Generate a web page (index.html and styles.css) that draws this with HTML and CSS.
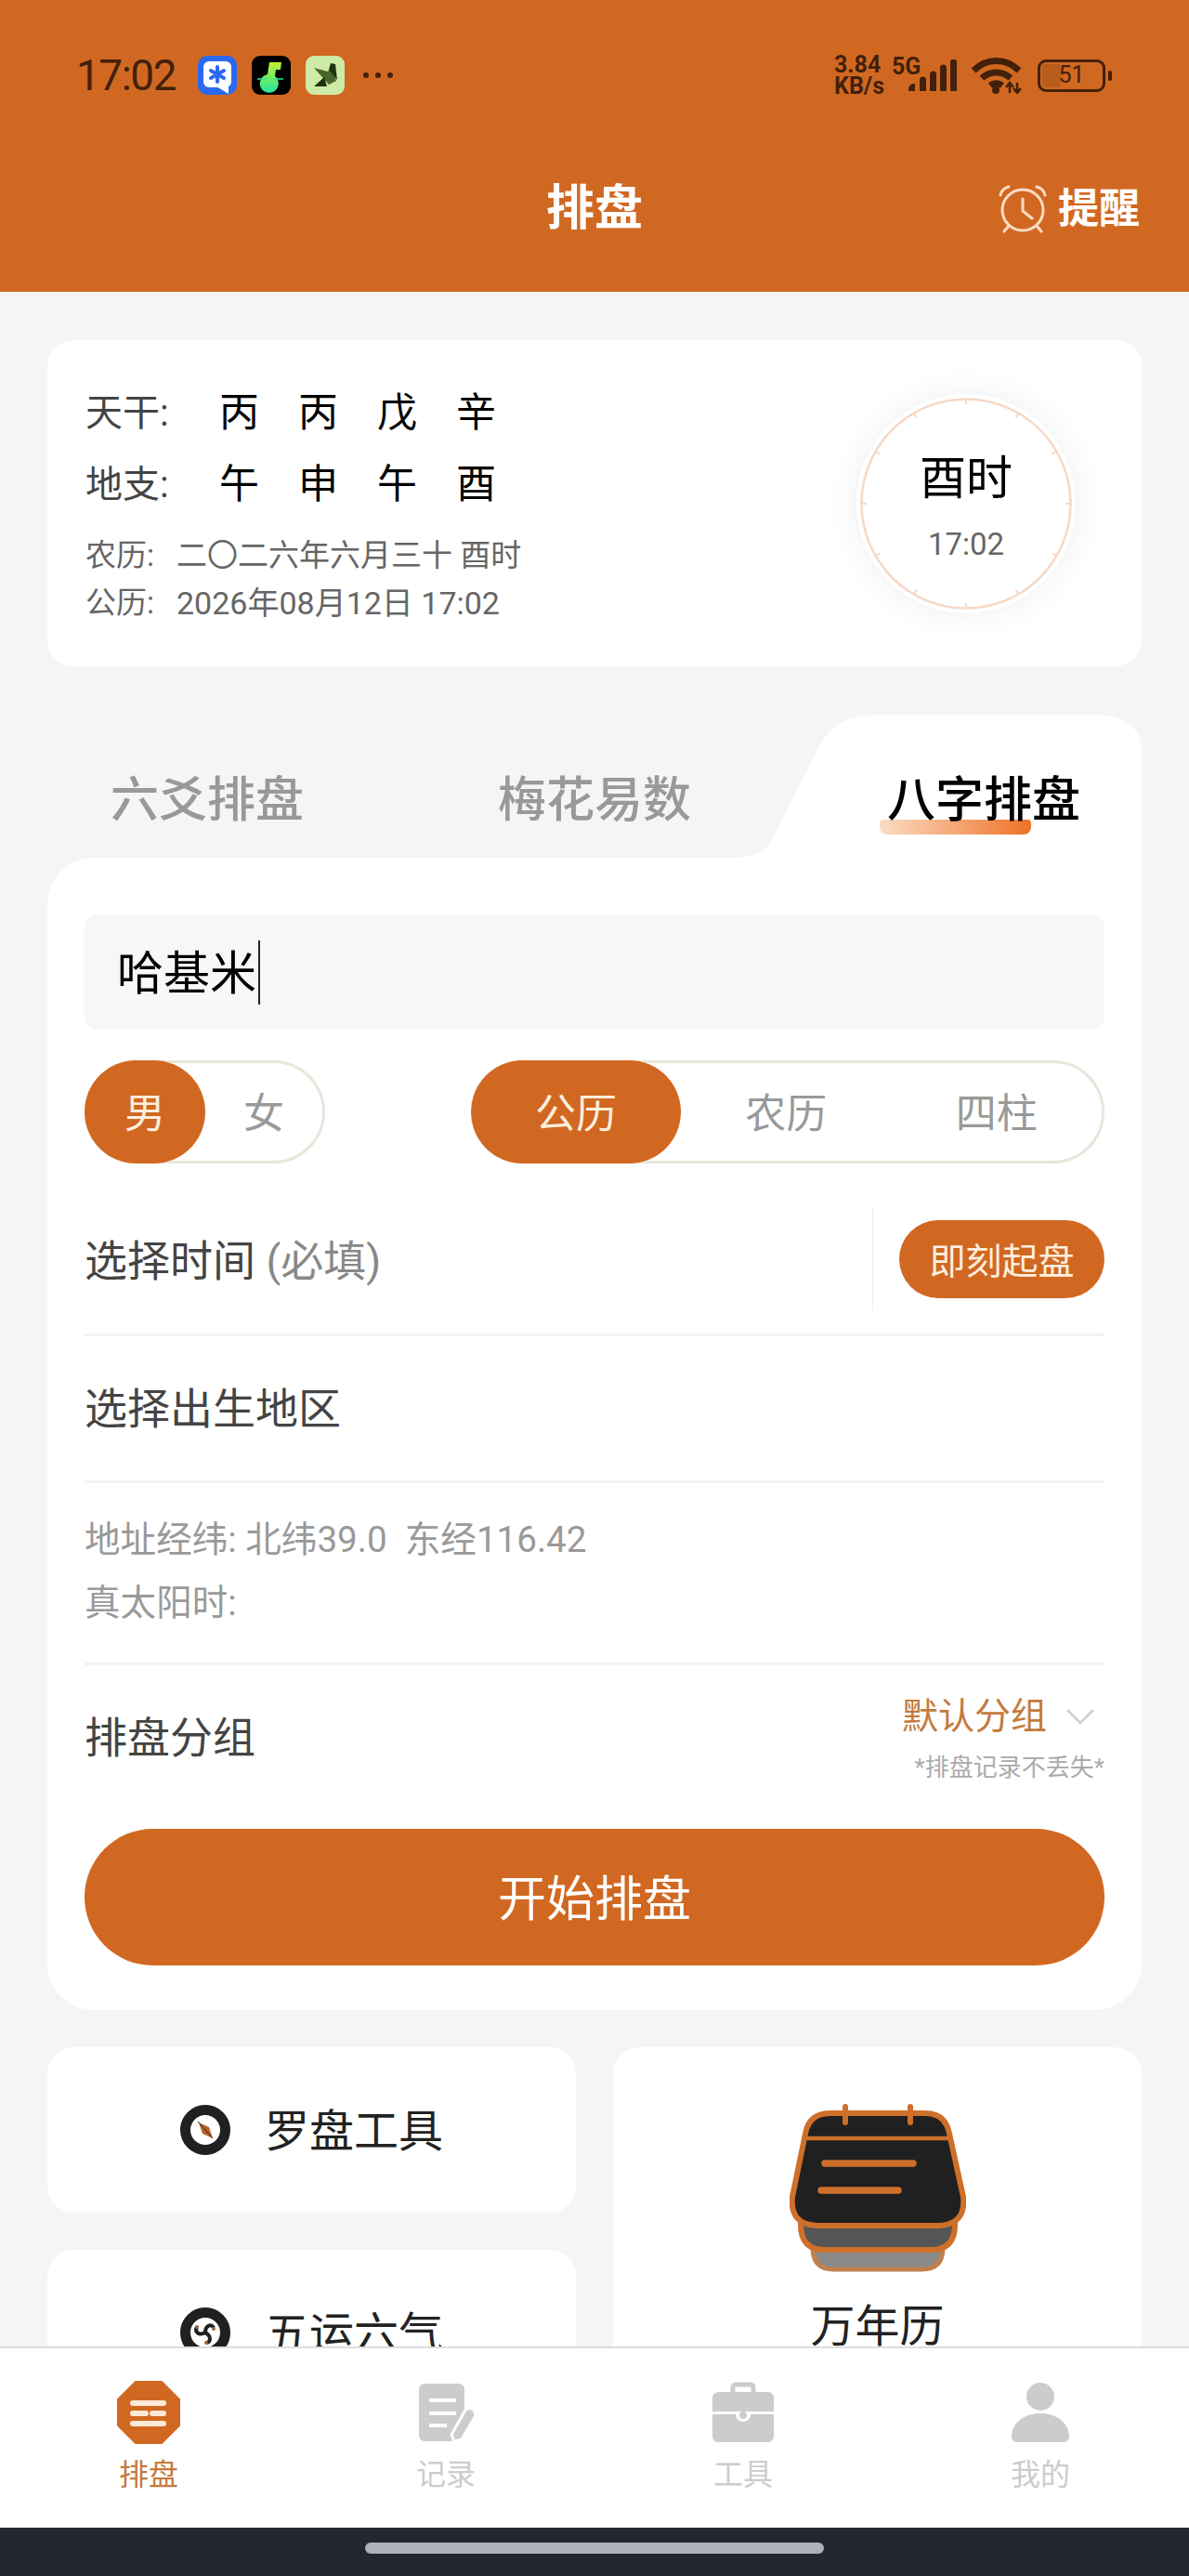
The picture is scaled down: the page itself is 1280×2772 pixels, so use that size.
FILE: index.html
```html
<!DOCTYPE html>
<html lang="zh-CN">
<head>
<meta charset="utf-8">
<title>排盘</title>
<link rel="stylesheet" href="styles.css">
</head>
<body>
<div class="app">
  <header class="header">
    <div class="status">
      <div class="status-left">
        <span class="clock-time">17:02</span>
        <svg class="app-icon" viewBox="0 0 42 42"><rect width="42" height="42" rx="10" fill="#2b6af0"/><rect x="6" y="6" width="30" height="28" rx="6" fill="#fff"/><path d="M20 33h13v8z" fill="#fff"/><path d="M21 12v16M14 16l14 8M28 16l-14 8" stroke="#2b6af0" stroke-width="4" stroke-linecap="round"/></svg>
        <svg class="app-icon" viewBox="0 0 42 42"><defs><linearGradient id="gn" x1="0" y1="0" x2="0" y2="1"><stop offset="0" stop-color="#c4f02c"/><stop offset="1" stop-color="#22e8a0"/></linearGradient></defs><rect width="42" height="42" rx="9" fill="#000"/><path d="M19 7H32L31 15H26L25 22A10 10 0 1 1 17 20Z" fill="url(#gn)"/><path d="M6 25h10M24 25h10" stroke="#2ee88c" stroke-width="1.500"/></svg>
        <svg class="app-icon" viewBox="0 0 42 42"><rect width="42" height="42" rx="9" fill="#cdeaa6"/><path d="M9 13L24 17 28 10 33 27 25 31Z" fill="#48662c"/><path d="M25 15L27 8 32 9 34 26Z" fill="#1c3310"/><path d="M9 33L20 23 23 33Z" fill="#1c3310"/></svg>
        <span class="dots"><i></i><i></i><i></i></span>
      </div>
      <div class="status-right">
        <div class="netspeed"><span>3.84</span><span>KB/s</span></div>
        <div class="signal">
          <span class="gen">5G</span>
          <svg class="signal-bars" viewBox="0 0 52 34"><path d="M0 34v-2a6 6 0 0 1 6-6h1v8zM12 34V22a3 3 0 0 1 7 0v12zM23 34V16a3 3 0 0 1 7 0v18zM34 34V9a3 3 0 0 1 7 0v25zM45 34V3a3 3 0 0 1 7 0v31z" fill="#43200a"/></svg>
        </div>
        <svg class="wifi" viewBox="0 0 56 40"><path d="M3 15C17 1 38 1 52 15M12 23c9-8 22-8 31 0M21 31c4-3 9-3 13 0" fill="none" stroke="#43200a" stroke-width="7"/><circle cx="27" cy="36" r="4" fill="#43200a"/><path d="M42 28v11M38 33l4-5 4 5M50 39V28M46 34l4 5 4-5" fill="none" stroke="#43200a" stroke-width="2.500"/></svg>
        <div class="battery"><span class="battery-level"></span><span class="battery-text">51</span></div>
        <span class="battery-nub"></span>
      </div>
    </div>
    <div class="titlebar">
      <span></span>
      <h1 class="title">排盘</h1>
      <div class="remind">
        <svg class="alarm" viewBox="0 0 52 52"><g fill="none" stroke="#fbdcc6" stroke-width="3" stroke-linecap="round"><circle cx="26" cy="27" r="22"/><path d="M26 15v13l10 8"/><path d="M2 11c1-5 5-8 9-9M50 11c-1-5-5-8-9-9"/><path d="M11 44l-5 6M41 44l5 6"/></g></svg>
        <span>提醒</span>
      </div>
    </div>
  </header>

  <main class="main">
    <section class="now-card">
      <div class="now-info">
        <div class="pillar-row"><span class="pillar-label">天干:</span><span class="pillar-char">丙</span><span class="pillar-char">丙</span><span class="pillar-char">戊</span><span class="pillar-char">辛</span></div>
        <div class="pillar-row"><span class="pillar-label">地支:</span><span class="pillar-char">午</span><span class="pillar-char">申</span><span class="pillar-char">午</span><span class="pillar-char">酉</span></div>
        <div class="date-row first"><span class="date-label">农历:</span><span>二〇二六年六月三十 酉时</span></div>
        <div class="date-row second"><span class="date-label">公历:</span><span class="solar">2026年08月12日 17:02</span></div>
      </div>
      <div class="dial">
        <svg class="dial-face" viewBox="0 0 236 236">
          <circle cx="118" cy="118" r="112.500" fill="none" stroke="#f6d8c4" stroke-width="2.500"/>
          <g stroke="#f6d8c4" stroke-width="2">
            <path d="M118 5v6M118 231v-6M5 118h6M231 118h-6M61.500 20.200l3 5.200M174.500 215.800l-3-5.200M20.200 61.500l5.200 3M215.800 174.500l-5.200-3M174.500 20.200l-3 5.200M61.500 215.800l3-5.200M215.800 61.500l-5.200 3M20.200 174.500l5.200-3"/>
          </g>
        </svg>
        <span class="dial-hour">酉时</span>
        <span class="dial-time">17:02</span>
      </div>
    </section>

    <section class="chart">
      <svg class="tab-shape" viewBox="0 0 1178 160"><path d="M741 154Q772 154 782 131L831 34Q848 0 896 0H1125Q1178 0 1178 41V160H741Z" fill="#fff"/></svg>
      <div class="tabs">
        <div class="tab"><span>六爻排盘</span></div>
        <div class="tab"><span>梅花易数</span></div>
        <div class="tab active"><span>八字排盘</span></div>
      </div>
      <div class="form">
        <div class="name-input"><span class="name-text">哈基米</span><i class="caret"></i></div>
        <div class="toggles">
          <div class="toggle gender"><span class="opt on">男</span><span class="opt">女</span></div>
          <div class="toggle calendar"><span class="opt on">公历</span><span class="opt">农历</span><span class="opt">四柱</span></div>
        </div>
        <div class="time-row">
          <div class="field-text">选择时间 <span class="required">(必填)</span></div>
          <div class="time-action"><button class="now-btn" type="button">即刻起盘</button></div>
        </div>
        <div class="rule"></div>
        <div class="birth-row field-text">选择出生地区</div>
        <div class="rule"></div>
        <div class="geo">
          <div class="geo-line">地址经纬: 北纬39.0&nbsp;&nbsp;东经116.42</div>
          <div class="geo-line">真太阳时:</div>
        </div>
        <div class="rule"></div>
        <div class="group-row">
          <div class="field-text">排盘分组</div>
          <div class="group-value">
            <div class="group-select"><span>默认分组</span><svg class="chevron" viewBox="0 0 32 18"><path d="M2 2l14 14L30 2" fill="none" stroke="#cfcfcf" stroke-width="2.500"/></svg></div>
            <div class="group-note">*排盘记录不丢失*</div>
          </div>
        </div>
        <button class="start-btn" type="button">开始排盘</button>
      </div>
    </section>

    <section class="tools">
      <div class="tool">
        <svg class="tool-icon" viewBox="0 0 54 54"><circle cx="27" cy="27" r="21.500" fill="#fff" stroke="#202020" stroke-width="11"/><path d="M20 19l11 5 4 12-11-5z" fill="#b5622a"/><path d="M19 18l16 18" stroke="#3a2a20" stroke-width="1"/></svg>
        <span class="tool-name">罗盘工具</span>
      </div>
      <div class="tool tool-tall">
        <svg class="calendar-icon" viewBox="0 0 190 182">
          <path d="M25 130L28 157H162L165 130V155Q165 178 142 178H48Q25 178 25 155Z" fill="#8a8a8a" stroke="#c08050" stroke-width="5"/>
          <path d="M12 120V130Q12 157 38 157H152Q178 157 178 130V120Z" fill="#555" stroke="#ce6f2a" stroke-width="6"/>
          <path d="M44 10H146Q168 10 172 32L187 100Q190 130 160 131H30Q0 130 3 100L17 32Q21 10 44 10Z" fill="#202020" stroke="#ce6f2a" stroke-width="6"/>
          <g stroke="#ce6f2a" fill="none" stroke-linecap="round">
            <path d="M19 37H171" stroke-width="4.500"/>
            <path d="M60 3V20M130 3V20" stroke-width="6"/>
            <path d="M38 64H133M34 93H117" stroke-width="7.500"/>
          </g>
        </svg>
        <span class="tool-name">万年历</span>
      </div>
      <div class="tool">
        <svg class="tool-icon" viewBox="0 0 54 54"><circle cx="27" cy="27" r="21.500" fill="#fff" stroke="#202020" stroke-width="11"/><g fill="none" stroke="#202020" stroke-width="4"><path d="M27 27c0-8 7-10 9-5M27 27c7 4 6 11 1 11M27 27c-7 4-12-1-9-6"/></g><g fill="#a3683a"><circle cx="36" cy="23" r="2"/><circle cx="28" cy="38" r="2"/><circle cx="18" cy="21" r="2"/></g></svg>
        <span class="tool-name">五运六气</span>
      </div>
    </section>
  </main>

  <nav class="tabbar">
    <div class="nav-item current">
      <svg class="nav-icon" viewBox="0 0 68 68"><path d="M20 1H48L67 20V48L48 67H20L1 48V20Z" fill="#d16822" stroke="#d16822" stroke-linejoin="round" stroke-width="2"/><g stroke="#fde8d6" stroke-width="6" stroke-linecap="round"><path d="M17 24H50M17 35H31M38 35H50M17 46H50"/></g></svg>
      <span>排盘</span>
    </div>
    <div class="nav-item">
      <svg class="nav-icon" viewBox="0 0 68 68"><rect x="5" y="3" width="49" height="62" rx="6" fill="#ccc"/><g stroke="#fff" stroke-width="4"><path d="M16 21H45M16 35H45M16 48H35"/></g><path d="M43 65L40 58 54 33a5 5 0 0 1 11 6L51 63Z" fill="#ccc" stroke="#fff" stroke-width="3"/></svg>
      <span>记录</span>
    </div>
    <div class="nav-item">
      <svg class="nav-icon" viewBox="0 0 68 68"><path d="M23 14V7a3 3 0 0 1 3-3H42a3 3 0 0 1 3 3V14" fill="none" stroke="#ccc" stroke-width="5"/><path d="M1 18a6 6 0 0 1 6-6H61a6 6 0 0 1 6 6V33H1Z" fill="#ccc"/><path d="M1 36H26a8 8 0 0 0 16 0H67V60a6 6 0 0 1-6 6H7a6 6 0 0 1-6-6Z" fill="#ccc"/><circle cx="34" cy="37" r="4" fill="#ccc"/></svg>
      <span>工具</span>
    </div>
    <div class="nav-item">
      <svg class="nav-icon" viewBox="0 0 68 68"><ellipse cx="34" cy="17" rx="15" ry="15" fill="#ccc"/><path d="M3 60C3 45 17 35 34 35S65 45 65 60a6 6 0 0 1-6 6H9a6 6 0 0 1-6-6Z" fill="#ccc"/></svg>
      <span>我的</span>
    </div>
  </nav>
  <div class="home-bar"><span class="home-pill"></span></div>
</div>
</body>
</html>
```
FILE: styles.css
```css
* { box-sizing: border-box; }
html, body { margin: 0; padding: 0; }
body {
  width: 1280px;
  height: 2772px;
  overflow: hidden;
  background: #f5f5f5;
  font-family: Roboto, "Noto Sans CJK SC", sans-serif;
}
.app { width: 1280px; height: 2772px; display: flex; flex-direction: column; overflow: hidden; }

/* header */
.header { height: 314px; background: #d16822; flex: none; }
.status { height: 162px; display: flex; justify-content: space-between; align-items: center; padding: 0 83px 0 82px; color: #43200a; }
.status-left { display: flex; align-items: center; }
.clock-time { font-size: 46px; line-height: 48px; letter-spacing: -1.500px; width: 131px; }
.app-icon { width: 42px; height: 42px; margin-right: 16px; }
.dots { display: flex; gap: 7px; margin-left: 4px; }
.dots i { width: 6px; height: 6px; border-radius: 50%; background: #43200a; }
.status-right { display: flex; align-items: center; }
.netspeed { display: flex; flex-direction: column; width: 62px; font-size: 25px; font-weight: 700; line-height: 23px; }
.signal { position: relative; width: 70px; height: 40px; }
.gen { position: absolute; left: 0; top: -1px; font-size: 25px; line-height: 24px; font-weight: 700; }
.signal-bars { position: absolute; left: 18px; top: 3px; width: 52px; height: 34px; }
.wifi { width: 56px; height: 40px; margin-left: 15px; }
.battery { position: relative; width: 73px; height: 35px; margin-left: 16px; border: 3px solid #43200a; border-radius: 9px; display: flex; align-items: center; justify-content: center; }
.battery-level { position: absolute; left: 2px; top: 2px; bottom: 2px; width: 20px; border-radius: 4px; background: #b95c1c; }
.battery-text { position: relative; font-size: 25px; line-height: 28px; color: #43200a; }
.battery-nub { width: 4px; height: 11px; margin-left: 3px; border-radius: 2px; background: #43200a; }
.titlebar { height: 120px; display: grid; grid-template-columns: 1fr auto 1fr; align-items: center; padding: 6px 53px 0; }
.title { margin: 0; font-size: 52px; line-height: 64px; font-weight: 700; color: #fff; }
.remind { justify-self: end; display: flex; align-items: center; gap: 12px; font-size: 44px; line-height: 52px; font-weight: 700; color: #fff; }
.alarm { width: 52px; height: 52px; }

/* main */
.main { flex: 1; min-height: 0; overflow: hidden; padding: 52px 51px 0; }
.now-card { height: 351px; background: #fff; border-radius: 28px; display: flex; justify-content: space-between; align-items: center; padding: 0 71px 0 41px; }
.now-info { align-self: flex-start; padding-top: 40px; }
.pillar-row { height: 75px; display: flex; align-items: center; }
.pillar-row + .pillar-row { height: 76px; padding-top: 3px; }
.pillar-label { width: 144px; padding-bottom: 6px; font-size: 40px; color: #444; }
.pillar-char { width: 85px; font-size: 43px; line-height: 50px; color: #000; }
.date-row { height: 53px; display: flex; align-items: center; font-size: 33px; color: #666; }
.date-row.first { margin-top: 11px; }
.date-row.second { padding-bottom: 3px; }
.date-label { width: 98px; }
.solar { font-size: 34px; }
.dial { position: relative; width: 236px; height: 236px; border-radius: 50%; background: #fff; box-shadow: 0 0 36px rgba(0, 0, 0, .07); display: flex; flex-direction: column; align-items: center; padding-top: 56px; }
.dial-face { position: absolute; left: 0; top: 0; width: 236px; height: 236px; }
.dial-hour { position: relative; font-size: 50px; line-height: 70px; color: #000; }
.dial-time { position: relative; margin-top: 11px; font-size: 33px; line-height: 50px; color: #666; }

/* chart */
.chart { position: relative; margin-top: 52px; }
.tab-shape { position: absolute; left: 0; top: 0; width: 1178px; height: 160px; }
.tabs { position: relative; z-index: 1; height: 154px; display: grid; grid-template-columns: repeat(3, 417px); justify-content: center; }
.tab { padding-top: 64px; text-align: center; font-size: 52px; line-height: 58px; font-weight: 500; color: #999; }
.tab span { position: relative; display: inline-block; }
.tab.active { color: #000; padding-left: 4px; }
.tab.active span::after { content: ""; position: absolute; z-index: -1; left: -8px; top: 49px; width: 163px; height: 16px; border-radius: 4px 4px 8px 8px; background: linear-gradient(90deg, #fbdcc4, #ee7226); }
.form { position: relative; background: #fff; border-radius: 50px 0 50px 50px; padding: 61px 40px 48px; }
.name-input { height: 124px; background: #f7f7f7; border-radius: 14px; display: flex; align-items: center; padding-left: 35px; font-size: 50px; color: #000; }
.name-text { padding-bottom: 6px; }
.caret { width: 2px; height: 69px; margin-left: 2px; background: #222; }
.toggles { margin-top: 33px; display: flex; justify-content: space-between; }
.toggle { height: 111px; display: flex; border: 3px solid #e8e6da; border-radius: 56px; }
.gender { width: 259px; }
.calendar { width: 682px; }
.opt { flex: 1; margin: -3px 0; padding-bottom: 3px; display: flex; align-items: center; justify-content: center; font-size: 44px; color: #999; }
.opt:first-child { margin-left: -3px; }
.opt.on { flex: none; border-radius: 56px; background: #d16822; color: #fdeedd; }
.gender .opt.on { width: 130px; }
.calendar .opt.on { width: 226px; }
.field-text { font-size: 46px; color: #444; }
.required { color: #888; }
.time-row { margin-top: 48px; margin-bottom: 25px; height: 110px; display: flex; justify-content: space-between; align-items: center; }
.time-row .field-text { padding-bottom: 4px; }
.time-action { height: 110px; width: 250px; border-left: 1px solid #eee; display: flex; align-items: center; justify-content: flex-end; }
.now-btn { width: 221px; height: 84px; border: 0; padding: 0 0 2px; border-radius: 42px; background: #d16822; color: #fdeedd; font: inherit; font-size: 39px; }
.rule { height: 3px; background: #f3f3f3; }
.birth-row { height: 155px; display: flex; align-items: center; padding-bottom: 7px; }
.geo { padding: 23px 0 34px; }
.geo-line { height: 68px; display: flex; align-items: center; font-size: 38.600px; color: #999; }
.group-row { height: 154px; display: flex; justify-content: space-between; align-items: center; }
.group-row > .field-text { padding-bottom: 7px; }
.group-value { align-self: flex-start; padding-top: 30px; display: flex; flex-direction: column; align-items: flex-end; }
.group-select { display: flex; align-items: center; font-size: 39px; line-height: 50px; color: #c47a3e; padding-right: 10px; }
.chevron { width: 32px; height: 18px; margin-left: 20px; }
.group-note { margin-top: 10px; font-size: 26px; line-height: 40px; color: #aaa; }
.start-btn { display: block; width: 100%; height: 147px; margin-top: 22px; border: 0; padding: 0 0 4px; border-radius: 74px; background: #d16822; color: #fff; font: inherit; font-size: 52px; }

/* tools */
.tools { margin-top: 40px; display: grid; grid-template-columns: 569px 569px; column-gap: 40px; row-gap: 40px; grid-template-rows: 178px 178px; }
.tool { background: #fff; border-radius: 28px; display: flex; align-items: center; justify-content: center; gap: 37px; font-size: 48px; color: #222; }
.tool-name { margin-bottom: 6px; }
.tool-tall { grid-column: 2; grid-row: 1 / 3; flex-direction: column; justify-content: flex-start; padding-top: 61px; gap: 30px; }
.tool-icon { width: 54px; height: 54px; }
.calendar-icon { width: 190px; height: 182px; }
.tool-tall .tool-name { line-height: 56px; margin-bottom: 0; }

/* tab bar */
.tabbar { flex: none; height: 195px; background: #fff; border-top: 2px solid #dcdcdc; display: grid; grid-template-columns: repeat(4, 320px); padding-top: 35px; position: relative; z-index: 2; }
.nav-item { display: flex; flex-direction: column; align-items: center; font-size: 32px; line-height: 40px; color: #ccc; }
.nav-item.current { color: #c47a3e; }
.nav-icon { width: 68px; height: 68px; margin-bottom: 13px; }
.home-bar { flex: none; height: 52px; background: #222730; display: flex; justify-content: center; padding-top: 16px; }
.home-pill { width: 494px; height: 12px; border-radius: 6px; background: #aeb1b8; }
```
